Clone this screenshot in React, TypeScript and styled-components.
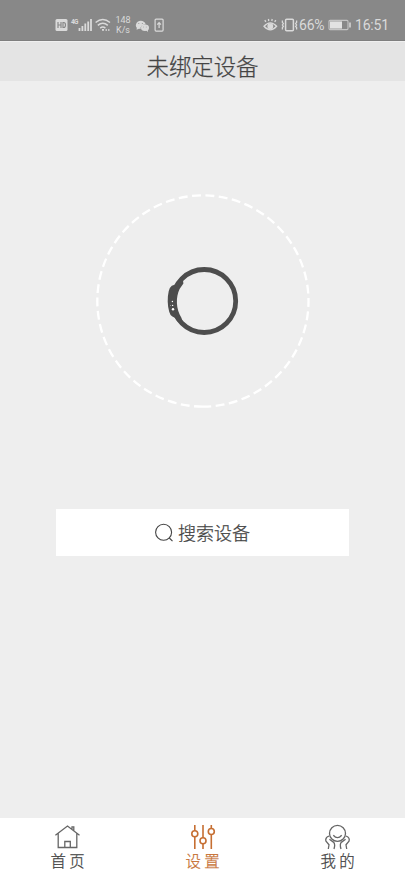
import React from "react";
import styled, { createGlobalStyle } from "styled-components";

const GlobalStyle = createGlobalStyle`
  * { box-sizing: border-box; }
  body { margin: 0; background: #eeeeee; }
  svg { display: block; flex: none; }
`;

const Screen = styled.div`
  display: flex;
  flex-direction: column;
  width: 405px;
  height: 878px;
  overflow: hidden;
  background: #eeeeee;
  color: #444;
  font-family: "Noto Sans CJK SC", sans-serif;
`;

const StatusBar = styled.header`
  display: flex;
  justify-content: space-between;
  align-items: center;
  height: 41px;
  padding: 9px 17px 0 55px;
  background: #888888;
  border-bottom: 1px solid #7e7e7e;
  color: #dadada;
  font-family: Roboto, sans-serif;
`;

const StatusGroup = styled.div`
  display: flex;
  align-items: center;
`;

const Speed = styled.div`
  width: 16px;
  margin: 0 4px 0 4px;
  font-size: 9px;
  line-height: 10px;
  text-align: center;
  white-space: nowrap;
`;

const StatusText = styled.span<{ $width: number; $size: number }>`
  width: ${(p) => p.$width}px;
  font-size: ${(p) => p.$size}px;
  line-height: 16px;
  letter-spacing: -0.2px;
  white-space: nowrap;
`;

const TitleBar = styled.div`
  display: flex;
  justify-content: center;
  height: 40px;
  background: #e4e4e4;
  border-top: 1px solid #efefef;
`;

const Title = styled.h1`
  margin: 0;
  font-size: 22.4px;
  font-weight: 300;
  line-height: 47px;
  color: #444;
  -webkit-text-stroke: 0.25px #444;
`;

const Main = styled.main`
  display: flex;
  flex: 1;
  flex-direction: column;
  align-items: center;
  padding-top: 112px;
`;

const SearchButton = styled.button`
  display: flex;
  justify-content: center;
  align-items: center;
  gap: 4px;
  width: 293px;
  height: 47px;
  margin: 100px 0 0;
  padding: 0 0 1px;
  border: 0;
  background: #fff;
  color: #444;
  font: 300 18px/26px "Noto Sans CJK SC", sans-serif;
  -webkit-text-stroke: 0.25px #444;
`;

const TabBar = styled.nav`
  display: grid;
  grid-template-columns: repeat(3, 1fr);
  height: 60px;
  background: #fff;
`;

const Tab = styled.a<{ $active?: boolean }>`
  display: flex;
  flex-direction: column;
  align-items: center;
  padding-top: 5px;
  color: ${(p) => (p.$active ? "#c66f32" : "#444")};
`;

const TabLabel = styled.span`
  font-size: 15.4px;
  line-height: 18px;
  font-weight: 300;
  white-space: pre;
  -webkit-text-stroke: 0.25px currentColor;
`;

const SignalIcons = () => (
  <svg width="56" height="18" viewBox="55 15 56 18" fill="none" stroke="#dadada">
    <rect x="55.5" y="18" width="12" height="12" rx="1.5" fill="#dadada" stroke="none" />
    <path d="M58 21v6M61 21v6M58 24h3M63 21.5v5h.7c2.4 0 2.4-5 0-5z" stroke="#888" strokeWidth="1.2" />
    <text x="71" y="23" fontSize="6.5" fontFamily="Roboto" fontWeight="700" fill="#dadada" stroke="none" textLength="7.5">4G</text>
    <path d="M79.5 30v-3M82.4 30v-5M85.3 30v-7.5M88.2 30v-9.5M91 30V18" strokeWidth="1.8" />
    <path d="M95.6 21.5q7.2-6 14.4 0M97.8 24.4q5-4.2 10 0M100.2 27.1q2.6-2 5.2 0" strokeWidth="1.5" />
    <path d="M102 28.8h2M105.5 29h1.5M108 29h1.5" strokeWidth="1.7" />
  </svg>
);

const AppIcons = () => (
  <svg width="30" height="18" viewBox="135 15 30 18" fill="#dadada">
    <path d="M136.8 26.7c-1-1-1-2.2-.9-3 .8-5.2 8.8-5.2 9.8-.2-3.2 0-5.6 2-5 4.4l-1.7-.1-2.4 1z" />
    <ellipse cx="145" cy="26.7" rx="4" ry="3.2" />
    <path d="M146 29.2l2 1.7-.2-3z" />
    <g fill="#888"><circle cx="138.8" cy="22.6" r=".5" /><circle cx="142.3" cy="22.6" r=".5" /><circle cx="143.6" cy="26" r=".4" /><circle cx="146.2" cy="26" r=".4" /></g>
    <rect x="155.1" y="18.1" width="8" height="12" rx="1" fill="none" stroke="#dadada" strokeWidth="1.2" />
    <path d="M159.1 27v-5M157.2 23.6l1.9-1.9 1.9 1.9" fill="none" stroke="#dadada" strokeWidth="1.2" />
  </svg>
);

const ModeIcons = () => (
  <svg width="36" height="18" viewBox="263 17 36 18" fill="none" stroke="#dadada" strokeWidth="1.3">
    <path d="M264 27.3q6.3-7 12.6 0-6.3 7-12.6 0z" />
    <circle cx="270.3" cy="27.2" r="2.3" fill="#dadada" />
    <path d="M266 22.8l-1.3-1.5M268.8 22l-.4-2M271.8 22l.4-2M274.6 22.8l1.3-1.5" />
    <rect x="285.6" y="20.3" width="7.8" height="11.4" rx="1" strokeWidth="1.5" />
    <path d="M282.4 21.5v2l1 1-1 1.5 1 1.5-1 1v2M296.6 21.5v2l-1 1 1 1.5-1 1.5 1 1v2" />
  </svg>
);

const Battery = () => (
  <svg width="27" height="12" viewBox="0 0 27 12" fill="none">
    <rect x="1" y="1.4" width="19" height="9.2" rx="1" stroke="#c4c4c4" strokeWidth="1.1" />
    <rect x="2" y="2.4" width="12" height="7.2" fill="#e2e2e2" />
    <path d="M22 3.5v5" stroke="#dadada" strokeWidth="1.5" />
  </svg>
);

const DeviceRing = () => (
  <svg width="216" height="216" viewBox="95 192.5 216 216">
    <path d="M202.9 406.1a105.6 105.6 0 1 1 .01 0" fill="none" stroke="#fff" strokeWidth="2.3" strokeDasharray="8.9 4.46" />
    <circle cx="204.2" cy="300.5" r="31.5" fill="none" stroke="#4d4d4d" strokeWidth="4.8" />
    <path d="M182.6 277.3L178.6 280.4 175.2 284.1 171.8 285.3Q169.6 286.8 168.7 290.8C167.2 297 167.4 305 169.2 311.2Q170.2 315 172.4 316L175.2 317.6 177.8 321.3Q179.6 322.8 182.8 322.8L181.4 317.2C175.9 309 175.6 296.5 179.6 288.6L183.4 283Z" fill="#4d4d4d" />
    <g fill="#fff"><circle cx="172.4" cy="301" r=".7" /><circle cx="172.6" cy="304.9" r=".7" /><circle cx="173" cy="308.7" r="1.2" /><circle cx="170.6" cy="304.9" r=".4" /></g>
  </svg>
);

const SearchIcon = () => (
  <svg width="19" height="19" viewBox="155 522 19 19" fill="none" stroke="#444" strokeWidth="1.1">
    <circle cx="163.6" cy="531.2" r="8" />
    <path d="M169.3 537l3.2 3.2" />
  </svg>
);

const HomeIcon = () => (
  <svg width="28" height="28" viewBox="54 823 28 28" fill="none" stroke="#666" strokeWidth="1.3">
    <path d="M55.4 835.2L67.5 826l12 9.2M58.2 833.3v14.2h18.6v-14.2M72 829v-2.2h1.8v4M64.8 847.5v-6h5.5v6" />
  </svg>
);

const SlidersIcon = () => (
  <svg width="28" height="28" viewBox="189 823 28 28" fill="#fff" stroke="#c66f32" strokeWidth="1.6">
    <path d="M194.8 825v24M203 825v24M211.3 825v24" />
    <circle cx="194.8" cy="833.7" r="3" /><circle cx="203" cy="840.8" r="3" /><circle cx="211.3" cy="831.5" r="3" />
  </svg>
);

const ProfileIcon = () => (
  <svg width="28" height="28" viewBox="324 823 28 28" fill="none" stroke="#666" strokeWidth="1.3">
    <circle cx="337.5" cy="833.4" r="8" />
    <path d="M333.3 835.2q4.2 4.8 8.4 0" />
    <path d="M329 836q-4.2 1.6-3 5.2l3 3.6-.7 4.2M329.4 839.3l4 2.8q2.2 1.9.6 6.9" />
    <path d="M346 836q4.2 1.6 3 5.2l-3 3.6.7 4.2M345.6 839.3l-4 2.8q-2.2 1.9-.6 6.9" />
  </svg>
);

export default function App() {
  return (
    <>
      <GlobalStyle />
      <Screen>
        <StatusBar>
          <StatusGroup>
            <SignalIcons />
            <Speed>148<br />K/s</Speed>
            <AppIcons />
          </StatusGroup>
          <StatusGroup>
            <ModeIcons />
            <StatusText $width={29} $size={14}>66%</StatusText>
            <Battery />
            <StatusText $width={33} $size={14}>16:51</StatusText>
          </StatusGroup>
        </StatusBar>
        <TitleBar><Title>未绑定设备</Title></TitleBar>
        <Main>
          <DeviceRing />
          <SearchButton><SearchIcon />搜索设备</SearchButton>
        </Main>
        <TabBar>
          <Tab><HomeIcon /><TabLabel>首 页</TabLabel></Tab>
          <Tab $active><SlidersIcon /><TabLabel>设 置</TabLabel></Tab>
          <Tab><ProfileIcon /><TabLabel>我 的</TabLabel></Tab>
        </TabBar>
      </Screen>
    </>
  );
}
